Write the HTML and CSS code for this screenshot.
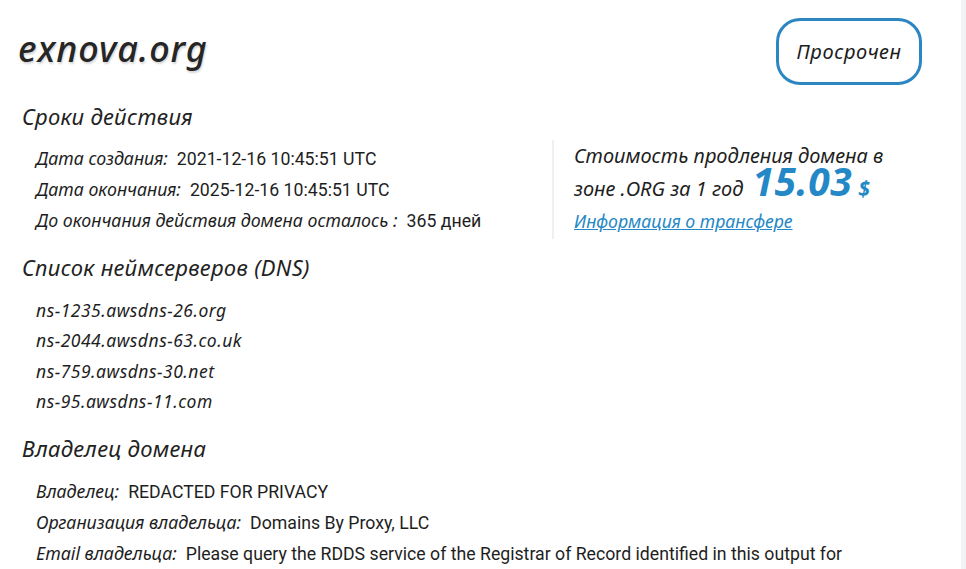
FILE: index.html
```html
<!DOCTYPE html>
<html lang="ru">
<head>
<meta charset="utf-8">
<link rel="stylesheet" href="styles.css">
</head>
<body>
<div class="page">
  <header class="top">
    <h1 class="domain">exnova.org</h1>
    <div class="badge">Просрочен</div>
  </header>

  <h2 class="sec">Сроки действия</h2>
  <div class="terms">
    <div class="rows">
      <div class="row"><span class="lbl">Дата создания:</span><span class="val">2021-12-16 10:45:51 UTC</span></div>
      <div class="row"><span class="lbl">Дата окончания:</span><span class="val">2025-12-16 10:45:51 UTC</span></div>
      <div class="row"><span class="lbl">До окончания действия домена осталось :</span><span class="val">365 дней</span></div>
    </div>
    <aside class="price">
      <div class="ptext">Стоимость продления домена в</div>
      <div class="ptext">зоне .ORG за 1 год <span class="amount">15.03</span><span class="cur">$</span></div>
      <a class="plink" href="#">Информация о трансфере</a>
    </aside>
  </div>

  <h2 class="sec sec2">Список неймсерверов (DNS)</h2>
  <div class="ns">
    <div class="nsrow">ns-1235.awsdns-26.org</div>
    <div class="nsrow">ns-2044.awsdns-63.co.uk</div>
    <div class="nsrow">ns-759.awsdns-30.net</div>
    <div class="nsrow">ns-95.awsdns-11.com</div>
  </div>

  <h2 class="sec sec3">Владелец домена</h2>
  <div class="rows owner">
    <div class="row"><span class="lbl">Владелец:</span><span class="val">REDACTED FOR PRIVACY</span></div>
    <div class="row"><span class="lbl">Организация владельца:</span><span class="val">Domains By Proxy, LLC</span></div>
    <div class="row"><span class="lbl">Email владельца:</span><span class="val">Please query the RDDS service of the Registrar of Record identified in this output for</span></div>
  </div>
</div>
</body>
</html>
```

FILE: styles.css
```css
html, body {
  margin: 0;
  padding: 0;
}
body {
  background: #f2f3f5;
  font-family: "Noto Sans", "Open Sans", sans-serif;
  color: #222;
  overflow: hidden;
}
.page {
  width: 961px;
  height: 569px;
  background: #fff;
  box-sizing: border-box;
  padding: 0 0 0 18px;
  overflow: hidden;
}
.top {
  display: flex;
  justify-content: space-between;
  align-items: flex-start;
  padding: 18px 39px 0 0;
}
.domain {
  margin: 11px 0 0 0;
  font-family: "Noto Sans", sans-serif;
  font-style: italic;
  font-weight: 500;
  font-size: 36px;
  line-height: 40px;
  letter-spacing: 0.9px;
  color: #262626;
  text-shadow: 1px 2px 2px #d8d8d8;
}
.badge {
  width: 140px;
  height: 61px;
  border: 3px solid #2b86c1;
  border-radius: 24px;
  display: flex;
  align-items: center;
  justify-content: center;
  font-style: italic;
  font-size: 20px;
  letter-spacing: 0.6px;
  color: #1c1c1c;
}
.sec {
  margin: 17px 0 0 4px;
  font-style: italic;
  font-weight: 400;
  font-size: 22px;
  line-height: 28px;
  letter-spacing: 0.3px;
  color: #222;
}
.terms {
  display: flex;
  align-items: flex-start;
  margin-top: 14px;
}
.rows {
  padding-left: 18px;
  display: flex;
  flex-direction: column;
  gap: 3px;
}
.terms .rows {
  width: 516px;
}
.row {
  display: flex;
  align-items: baseline;
  gap: 9px;
  height: 28px;
  line-height: 28px;
  white-space: nowrap;
}
.lbl {
  font-style: italic;
  font-size: 17.8px;
  color: #1e1e1e;
}
.val {
  font-family: Roboto, "Noto Sans", sans-serif;
  font-size: 17.7px;
  color: #1e1e1e;
}
.price {
  border-left: 2px solid #f0f0f0;
  padding: 0 0 4px 20px;
  margin-top: -4px;
}
.ptext {
  font-style: italic;
  font-size: 20px;
  line-height: 31px;
  color: #1e1e1e;
  white-space: nowrap;
}
.amount {
  font-style: italic;
  font-weight: 700;
  font-size: 39px;
  line-height: 20px;
  color: #2588c6;
  margin-left: 4px;
  letter-spacing: 0.5px;
}
.cur {
  font-style: italic;
  font-weight: 700;
  font-size: 21px;
  line-height: 20px;
  color: #2588c6;
  margin-left: 6px;
}
.plink {
  display: block;
  margin-top: 3px;
  font-style: italic;
  font-size: 17.7px;
  line-height: 28px;
  color: #2588c6;
  text-decoration: underline;
}
.sec2 {
  margin-top: 14px;
}
.ns {
  margin-top: 15px;
  padding-left: 18px;
  display: flex;
  flex-direction: column;
  gap: 2.3px;
}
.nsrow {
  font-style: italic;
  font-size: 17.5px;
  line-height: 28px;
  letter-spacing: 0.5px;
  color: #1e1e1e;
}
.sec3 {
  margin-top: 19px;
}
.owner {
  margin-top: 15px;
}
```
